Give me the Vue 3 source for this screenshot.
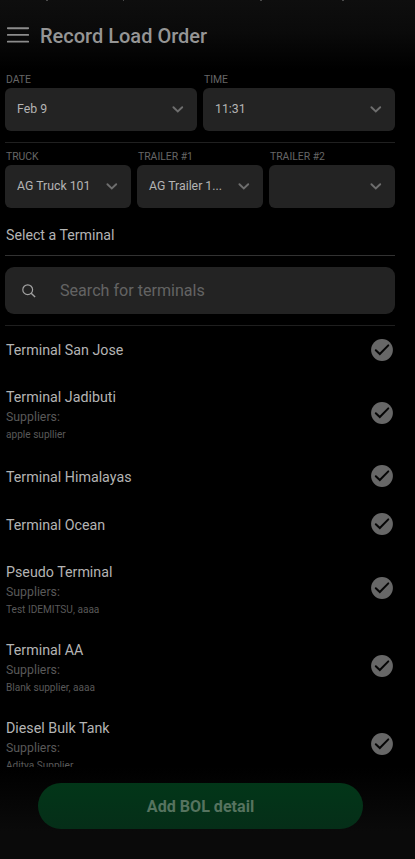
<template>
  <div class="screen">
    <header class="header">
      <!-- scrolled text, only the tips stay visible -->
      <svg class="scrolled" width="415" height="2" viewBox="0 0 415 2">
        <path d="M46 0h2M123 0h1M260 0h2M342 0h2" stroke="#4a4a4a" stroke-width="2" />
      </svg>
      <svg class="menu" width="22" height="16" viewBox="0 0 22 16">
        <path d="M0.8 1.2H21.2M0.8 7.9H21.2M0.8 14.6H21.2" stroke="#8c8c8c" stroke-width="1.9" stroke-linecap="round" />
      </svg>
      <h1>Record Load Order</h1>
    </header>

    <main class="content">
      <section v-for="(row, i) in rows" :key="i" class="row">
        <div v-for="field in row" :key="field.label" class="field">
          <label>{{ field.label }}</label>
          <div class="select">
            <span>{{ field.value }}</span>
            <svg width="12" height="8" viewBox="0 0 12 8">
              <path d="M1.4 2.2L5.8 6.5L10.2 2.2" fill="none" stroke="#6e6e6e" stroke-width="1.9" stroke-linecap="round" />
            </svg>
          </div>
        </div>
      </section>

      <h2>Select a Terminal</h2>

      <div class="search-wrap">
        <div class="search">
          <svg width="14" height="15" viewBox="0 0 14 15">
            <circle cx="5.7" cy="6.7" r="4.9" fill="none" stroke="#a2a2a2" stroke-width="1.2" />
            <path d="M9.2 10.2L13.1 14.1" stroke="#a2a2a2" stroke-width="1.4" />
          </svg>
          <span>Search for terminals</span>
        </div>
      </div>

      <ul class="list">
        <li v-for="t in terminals" :key="t.name" :class="{ tall: t.suppliers }">
          <div class="info">
            <p class="name">{{ t.name }}</p>
            <template v-if="t.suppliers">
              <p class="caption">Suppliers:</p>
              <p class="suppliers">{{ t.suppliers }}</p>
            </template>
          </div>
          <svg width="22" height="22" viewBox="0 0 22 22">
            <circle cx="11" cy="11" r="10.9" fill="#676767" />
            <path d="M4.8 11.3L8.8 15L17.3 6.4" fill="none" stroke="#050505" stroke-width="2" stroke-linecap="round" />
          </svg>
        </li>
      </ul>
    </main>

    <footer class="footer">
      <button>Add BOL detail</button>
    </footer>
  </div>
</template>

<script setup>
import { ref } from 'vue'

const rows = ref([
  [
    { label: 'DATE', value: 'Feb 9' },
    { label: 'TIME', value: '11:31' }
  ],
  [
    { label: 'TRUCK', value: 'AG Truck 101' },
    { label: 'TRAILER #1', value: 'AG Trailer 1...' },
    { label: 'TRAILER #2', value: '' }
  ]
])

const terminals = ref([
  { name: 'Terminal San Jose' },
  { name: 'Terminal Jadibuti', suppliers: 'apple supllier' },
  { name: 'Terminal Himalayas' },
  { name: 'Terminal Ocean' },
  { name: 'Pseudo Terminal', suppliers: 'Test IDEMITSU, aaaa' },
  { name: 'Terminal AA', suppliers: 'Blank supplier, aaaa' },
  { name: 'Diesel Bulk Tank', suppliers: 'Aditya Supplier' }
])
</script>

<style>
body {
  background: #000;
}
</style>

<style scoped>
.screen {
  display: flex;
  flex-direction: column;
  height: 859px;
  overflow: hidden;
  background: #000;
  color: #b4b4b4;
  font-family: Roboto, "Liberation Sans", sans-serif;
}
h1, h2, p, ul {
  margin: 0;
  padding: 0;
  font-weight: 400;
}
svg {
  flex: none;
  display: block;
}

/* header */
.header {
  position: relative;
  flex: none;
  box-sizing: border-box;
  height: 72px;
  display: flex;
  align-items: center;
  gap: 11px;
  padding-left: 7px;
  background: linear-gradient(#0e0e0e, #0a0a0a 45%, #000 96%);
}
.scrolled {
  position: absolute;
  top: 0;
  left: 0;
}
.menu {
  margin-top: -2px;
}
h1 {
  font-size: 20px;
  font-weight: 500;
  line-height: 24px;
  color: #959595;
}

.content {
  flex: none;
  height: 695px;
  padding: 0 20px 0 5px;
  overflow: hidden;
  box-sizing: border-box;
}

/* select fields */
.row {
  display: flex;
  gap: 6px;
  height: 69.5px;
}
.row + .row {
  box-sizing: border-box;
  height: 76px;
  border-top: 1.5px solid #202020;
  padding-top: 6.5px;
}
.field {
  flex: 1;
  min-width: 0;
}
.field label {
  display: block;
  height: 15.5px;
  padding-left: 1px;
  font-size: 10.4px;
  line-height: 15px;
  color: #666;
}
.select {
  display: flex;
  align-items: center;
  justify-content: space-between;
  height: 43px;
  padding: 0 13.5px 0 12px;
  box-sizing: border-box;
  border-radius: 6px;
  background: #232323;
  font-size: 12.3px;
  white-space: nowrap;
}

h2 {
  height: 37.5px;
  padding-left: 1px;
  font-size: 14.2px;
  line-height: 34px;
}

/* search box */
.search-wrap {
  box-sizing: border-box;
  height: 70.5px;
  padding: 10.5px 0;
  border-top: 1px solid #323232;
  border-bottom: 1px solid #1f1f1f;
}
.search {
  display: flex;
  align-items: center;
  gap: 24.5px;
  height: 47.5px;
  padding-left: 16.5px;
  border-radius: 9px;
  background: #232323;
  font-size: 16.1px;
  color: #636363;
}

/* terminals */
.list {
  list-style: none;
}
.list li {
  display: flex;
  align-items: center;
  justify-content: space-between;
  height: 48.4px;
  padding: 0 2px 0 1px;
}
.list li.tall {
  height: 78px;
}
.info {
  padding-top: 1.5px;
}
.tall .info {
  padding-top: 4.5px;
}
.name {
  font-size: 14.25px;
  line-height: 20px;
}
.caption {
  font-size: 12.3px;
  line-height: 20px;
  color: #595959;
}
.suppliers {
  font-size: 10.1px;
  line-height: 16px;
  color: #595959;
}

.footer {
  flex: 1;
  padding: 16px 52px 0 38px;
  background: linear-gradient(#000, #0a0a0a 70%);
}
button {
  display: block;
  width: 100%;
  height: 46px;
  border: 0;
  border-radius: 23px;
  background: linear-gradient(#023618, #052e18);
  color: #56735f;
  font-family: inherit;
  font-size: 16.1px;
  font-weight: 700;
}
</style>
